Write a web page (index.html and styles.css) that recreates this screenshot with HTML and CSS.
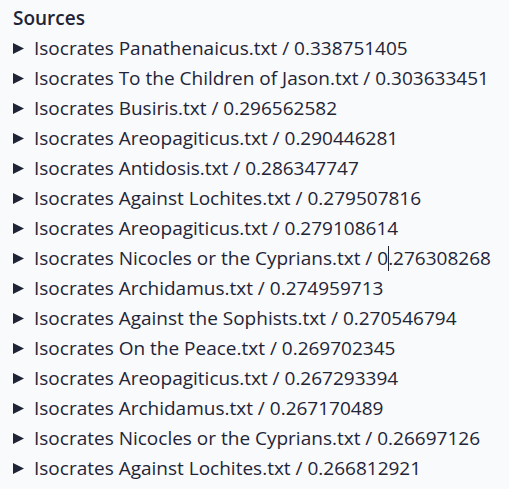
FILE: index.html
```html
<!DOCTYPE html>
<html>
<head>
<meta charset="utf-8">
<link rel="stylesheet" href="styles.css">
</head>
<body>
<div class="panel">
  <div class="heading">Sources</div>
  <div class="list">
    <details class="src"><summary><svg class="tri" viewBox="0 0 11 11"><path d="M0 0 L11 5.5 L0 11 Z"/></svg><span>Isocrates Panathenaicus.txt / 0.338751405</span></summary></details>
    <details class="src"><summary><svg class="tri" viewBox="0 0 11 11"><path d="M0 0 L11 5.5 L0 11 Z"/></svg><span>Isocrates To the Children of Jason.txt / 0.303633451</span></summary></details>
    <details class="src"><summary><svg class="tri" viewBox="0 0 11 11"><path d="M0 0 L11 5.5 L0 11 Z"/></svg><span>Isocrates Busiris.txt / 0.296562582</span></summary></details>
    <details class="src"><summary><svg class="tri" viewBox="0 0 11 11"><path d="M0 0 L11 5.5 L0 11 Z"/></svg><span>Isocrates Areopagiticus.txt / 0.290446281</span></summary></details>
    <details class="src"><summary><svg class="tri" viewBox="0 0 11 11"><path d="M0 0 L11 5.5 L0 11 Z"/></svg><span>Isocrates Antidosis.txt / 0.286347747</span></summary></details>
    <details class="src"><summary><svg class="tri" viewBox="0 0 11 11"><path d="M0 0 L11 5.5 L0 11 Z"/></svg><span>Isocrates Against Lochites.txt / 0.279507816</span></summary></details>
    <details class="src"><summary><svg class="tri" viewBox="0 0 11 11"><path d="M0 0 L11 5.5 L0 11 Z"/></svg><span>Isocrates Areopagiticus.txt / 0.279108614</span></summary></details>
    <details class="src"><summary><svg class="tri" viewBox="0 0 11 11"><path d="M0 0 L11 5.5 L0 11 Z"/></svg><span>Isocrates Nicocles or the Cyprians.txt / 0<i class="caret"></i>.276308268</span></summary></details>
    <details class="src"><summary><svg class="tri" viewBox="0 0 11 11"><path d="M0 0 L11 5.5 L0 11 Z"/></svg><span>Isocrates Archidamus.txt / 0.274959713</span></summary></details>
    <details class="src"><summary><svg class="tri" viewBox="0 0 11 11"><path d="M0 0 L11 5.5 L0 11 Z"/></svg><span>Isocrates Against the Sophists.txt / 0.270546794</span></summary></details>
    <details class="src"><summary><svg class="tri" viewBox="0 0 11 11"><path d="M0 0 L11 5.5 L0 11 Z"/></svg><span>Isocrates On the Peace.txt / 0.269702345</span></summary></details>
    <details class="src"><summary><svg class="tri" viewBox="0 0 11 11"><path d="M0 0 L11 5.5 L0 11 Z"/></svg><span>Isocrates Areopagiticus.txt / 0.267293394</span></summary></details>
    <details class="src"><summary><svg class="tri" viewBox="0 0 11 11"><path d="M0 0 L11 5.5 L0 11 Z"/></svg><span>Isocrates Archidamus.txt / 0.267170489</span></summary></details>
    <details class="src"><summary><svg class="tri" viewBox="0 0 11 11"><path d="M0 0 L11 5.5 L0 11 Z"/></svg><span>Isocrates Nicocles or the Cyprians.txt / 0.26697126</span></summary></details>
    <details class="src"><summary><svg class="tri" viewBox="0 0 11 11"><path d="M0 0 L11 5.5 L0 11 Z"/></svg><span>Isocrates Against Lochites.txt / 0.266812921</span></summary></details>
  </div>
</div>
</body>
</html>
```

FILE: styles.css
```css
html, body {
  margin: 0;
  padding: 0;
  background: #f9fafc;
}
body {
  font-family: "Open Sans", "Liberation Sans", sans-serif;
  color: #1f2537;
}
.panel {
  padding: 3px 0 0 13px;
}
.heading {
  font-size: 19px;
  font-weight: 600;
  line-height: 30px;
}
.list {
  display: flex;
  flex-direction: column;
}
.src summary {
  list-style: none;
  display: flex;
  align-items: center;
  gap: 10px;
  font-size: 19px;
  line-height: 30px;
  height: 30px;
  white-space: nowrap;
  cursor: pointer;
}
.src summary::-webkit-details-marker {
  display: none;
}
.tri {
  width: 11px;
  height: 11px;
  fill: #1f2537;
  flex: none;
}
.caret {
  display: inline-block;
  width: 1px;
  height: 25px;
  background: #1f2537;
  vertical-align: -6px;
  margin-right: -1px;
}
```
